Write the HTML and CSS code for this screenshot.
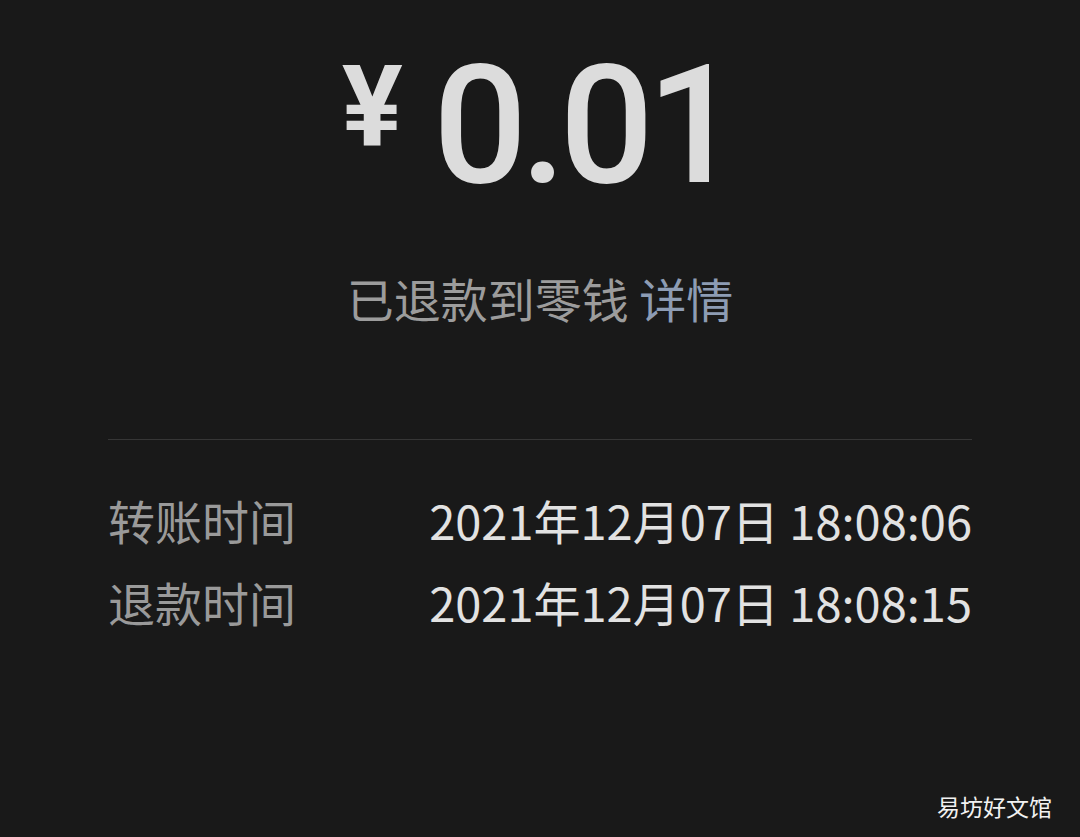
FILE: index.html
```html
<!DOCTYPE html>
<html lang="zh">
<head>
<meta charset="utf-8">
<link rel="stylesheet" href="styles.css">
</head>
<body>
<div class="page">
  <div class="amount">
    <span class="yen">¥</span><span class="num">0.01</span>
  </div>
  <div class="status">已退款到零钱 <span class="link">详情</span></div>
  <div class="divider"></div>
  <div class="rows">
    <div class="row"><span class="label">转账时间</span><span class="value">2021年12月07日 18:08:06</span></div>
    <div class="row"><span class="label">退款时间</span><span class="value">2021年12月07日 18:08:15</span></div>
  </div>
  <div class="watermark">易坊好文馆</div>
</div>
</body>
</html>
```
FILE: styles.css
```css
html, body {
  margin: 0;
  padding: 0;
  background: #191919;
}
body {
  width: 1080px;
  height: 837px;
  overflow: hidden;
  font-family: "Noto Sans CJK SC", "Noto Sans", sans-serif;
}
.page {
  position: relative;
  height: 837px;
  padding: 0 108px;
  box-sizing: border-box;
  display: flex;
  flex-direction: column;
}
.amount {
  margin-top: 22px;
  height: 170px;
  text-align: center;
  line-height: 170px;
  color: #dcdcdc;
  font-family: Roboto, "Noto Sans", sans-serif;
  white-space: nowrap;
}
.yen {
  font-size: 114px;
  font-weight: 700;
  margin-right: 30px;
  vertical-align: 36px;
}
.num {
  font-size: 166px;
  font-weight: 500;
  letter-spacing: -7px;
  margin-right: 4px;
}
.status {
  margin-top: 76px;
  text-align: center;
  font-size: 47px;
  line-height: 60px;
  color: #9c9c9c;
}
.link {
  color: #8d9cb4;
}
.divider {
  margin-top: 111px;
  height: 1px;
  background: #363636;
}
.rows {
  margin-top: 49px;
  display: flex;
  flex-direction: column;
  gap: 22px;
}
.row {
  display: flex;
  justify-content: space-between;
  align-items: center;
  height: 60px;
  font-size: 47px;
}
.label {
  color: #9a9a9a;
}
.value {
  color: #e2e2e2;
}
.watermark {
  position: absolute;
  right: 28px;
  bottom: 14px;
  font-size: 23px;
  color: #f2f2f2;
}
```
